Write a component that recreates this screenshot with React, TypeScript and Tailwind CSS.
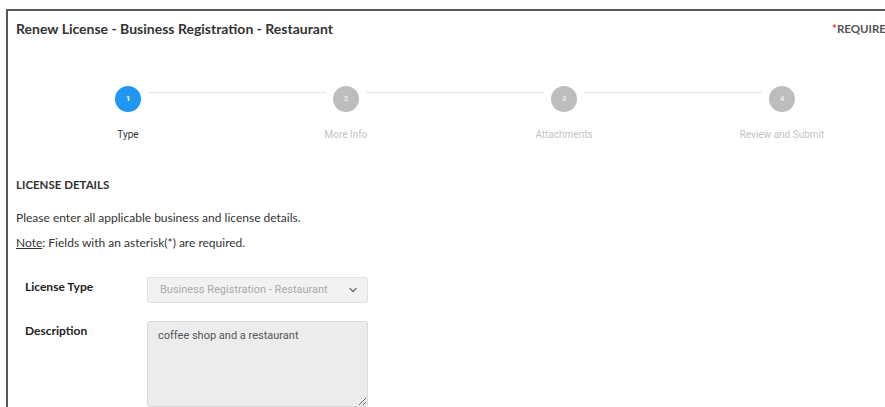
import { ChevronDown } from "lucide-react";

const steps = ["Type", "More Info", "Attachments", "Review and Submit"];

function Stepper() {
  return (
    <div className="ml-[11px] mt-[49px] grid grid-cols-[repeat(4,218px)] font-['Roboto',sans-serif]">
      {steps.map((label, i) => (
        <div key={label} className="relative flex flex-col items-center">
          {i < steps.length - 1 && (
            <div className="absolute left-[129px] top-[6px] h-px w-[178px] bg-[#e6e6e6]" />
          )}
          <div
            className={
              i === 0
                ? "flex h-[26px] w-[26px] items-center justify-center rounded-full bg-[#2196f3] text-[8px] font-bold text-white"
                : "flex h-[26px] w-[26px] items-center justify-center rounded-full bg-[#bdbdbd] text-[8px] font-bold text-[#e8e8e8]"
            }
          >
            {i + 1}
          </div>
          <div
            className={
              i === 0
                ? "mt-[17px] text-[10px] leading-[12px] text-[#333]"
                : "mt-[17px] text-[10px] leading-[12px] text-[#c4c4c4]"
            }
          >
            {label}
          </div>
        </div>
      ))}
    </div>
  );
}

export default function App() {
  return (
    <div className="h-[407px] w-[885px] overflow-hidden bg-white pl-[6px] pt-[9px] font-['Lato',sans-serif]">
      <div className="h-full overflow-hidden border-l-2 border-t-2 border-[#585858]">
        <div className="flex items-center justify-between pl-[8px] pt-[10px]">
          <h1 className="text-[14px] font-bold leading-[16px] text-[#333]">
            Renew License - Business Registration - Restaurant
          </h1>
          <span className="w-[70px] shrink-0 -mr-[17px] whitespace-nowrap text-[11.5px] font-bold leading-[16px] text-[#555]">
            <span className="text-[#e53935]">*</span>REQUIRED
          </span>
        </div>

        <Stepper />

        <div className="pl-[8px] pt-[37px] text-[#333]">
          <h2 className="text-[11.5px] font-bold leading-[14px]">LICENSE DETAILS</h2>
          <p className="mt-[19px] text-[12px] leading-[14px]">Please enter all applicable business and license details.</p>
          <p className="mt-[11px] text-[12px] leading-[14px]">
            <span className="underline">Note</span>: Fields with an asterisk(*) are required.
          </p>

          <div className="mt-[27px] grid grid-cols-[122px_221px] gap-y-[18px] pl-[9px]">
            <label className="pt-[3px] text-[12px] font-bold leading-[14px] text-[#222]">License Type</label>
            <div className="flex h-[26px] items-center justify-between rounded-[3px] border border-[#e0e0e0] bg-[#f2f2f2] pl-[12px] pr-[8px] font-['Roboto',sans-serif] text-[11px] text-[#aaa]">
              <span>Business Registration - Restaurant</span>
              <ChevronDown className="h-[12px] w-[12px] text-[#777]" strokeWidth={3} />
            </div>

            <label className="pt-[3px] text-[12px] font-bold leading-[14px] text-[#222]">Description</label>
            <textarea
              readOnly
              defaultValue="coffee shop and a restaurant"
              className="h-[86px] resize-y rounded-[3px] border border-[#d9d9d9] bg-[#ececec] px-[10px] py-[6px] font-['Roboto',sans-serif] text-[11px] text-[#555] outline-none"
            />
          </div>
        </div>
      </div>
    </div>
  );
}
